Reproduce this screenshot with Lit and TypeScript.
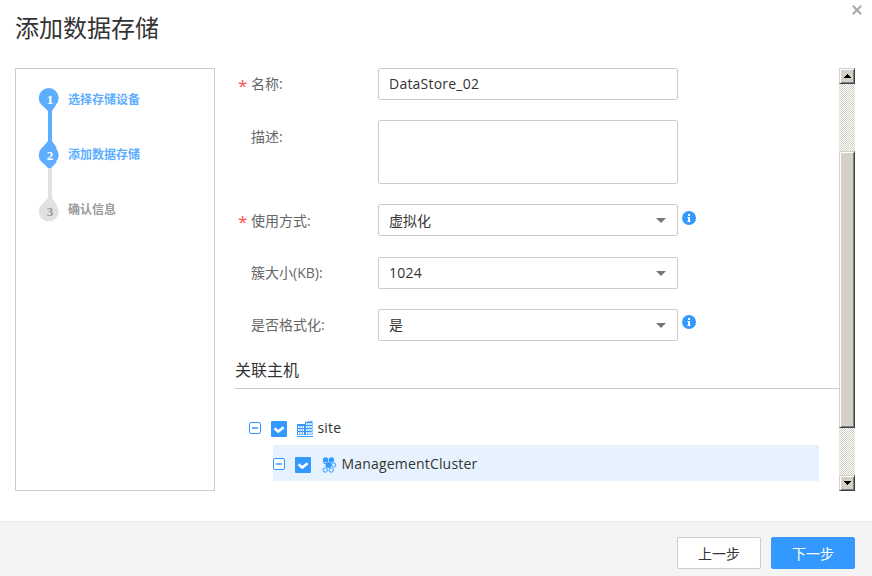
import { LitElement, html, svg, css, nothing } from "lit";
import { customElement } from "lit/decorators.js";

const infoIcon = html`<svg width="14" height="14" viewBox="0 0 14 14">
  <circle cx="7" cy="7" r="7" fill="#3399ff" />
  <path d="M6 3h2v2H6zM5.5 6H8v4h.6v1H5.4v-1H6V7h-.5z" fill="#fff" />
</svg>`;

const minusBox = html`<svg width="12" height="12" viewBox="0 0 12 12">
  <rect x="0.5" y="0.5" width="11" height="11" rx="1.5" fill="#fff" stroke="#3399ff" />
  <path d="M3 5.25h6v1.5H3z" fill="#3399ff" />
</svg>`;

const checkBox = html`<svg width="16" height="16" viewBox="0 0 16 16">
  <rect width="16" height="16" rx="1" fill="#3399ff" />
  <path d="M3.6 7.2l3.6 3.4 5.4-4.4" fill="none" stroke="#fff" stroke-width="2.6" />
</svg>`;

const siteIcon = html`<svg width="16" height="16" viewBox="0 0 16 16">
  <path fill="#3399ff" fill-rule="evenodd" d="M0 3h8v11H0zM1 5v2h1.5V5zM3.3 5v2h1.5V5zM5.6 5v2H7V5zM1 8v2h1.5V8zM3.3 8v2h1.5V8zM5.6 8v2H7V8zM1 11v2.4h1.5V11zM3.3 11v2.4h1.5V11zM5.6 11v2.4H7V11z
    M8 1l7.5-1v14H8zM9 2v2h1.5V2zM11.2 2v2h1.5V2zM13.3 2v2h1.4V2zM9 5v2h1.5V5zM11.2 5v2h1.5V5zM13.3 5v2h1.4V5zM9 8v2h1.5V8zM11.2 8v2h1.5V8zM13.3 8v2h1.4V8zM9 11v2.4h1.5V11zM11.2 11v2.4h1.5V11zM13.3 11v2.4h1.4V11z" />
  <path fill="#3399ff" d="M0 15h16v1H0z" />
</svg>`;

const clusterIcon = html`<svg width="15" height="16" viewBox="0 0 15 16">
  <g fill="#3399ff">
    <circle cx="3.6" cy="2.9" r="2.7" />
    <circle cx="9.4" cy="2.9" r="2.7" />
    <circle cx="6.5" cy="8" r="3" />
  </g>
  <g fill="none" stroke="#3399ff">
    <path d="M1 5.4l1 1.1h1.6" />
    <circle cx="11.7" cy="8" r="2.1" />
    <circle cx="3.2" cy="13" r="2.2" />
    <circle cx="9.2" cy="13" r="2.2" />
  </g>
</svg>`;

@customElement("wizard-steps")
export class WizardSteps extends LitElement {
  static styles = css`
    :host { display: flex; box-sizing: border-box; width: 200px; height: 423px; border: 1px solid #ccc; padding: 19px 0 0 22px; background: #fff; }
    .rail { flex: none; width: 22px; height: 136px; }
    .num { font: bold 13px "Liberation Serif", serif; text-anchor: middle; }
    .labels { display: flex; flex-direction: column; margin-left: 8px; padding-top: 2px; }
    .label { height: 55px; line-height: 20px; font-size: 12px; font-weight: 700; color: #5eaeff; }
    .label.todo { color: #999; }
  `;
  steps = ["选择存储设备", "添加数据存储", "确认信息"];
  render() {
    return html`
      <svg class="rail" viewBox="0 0 22 136">
        <path d="M10 76h4v38h-4z" fill="#e1e1e1" />
        <path d="M4 117l6-7h4l5 7z" fill="#e1e1e1" />
        <circle cx="10.7" cy="123.5" r="10" fill="#e1e1e1" />
        <path d="M10 12h4v48h-4z" fill="#5eaeff" />
        <path d="M4 17l6 6h4l4-6zM4 60l6-7h4l5 7zM4 74l6 6h3l6-6z" fill="#5eaeff" />
        <circle cx="10.7" cy="10" r="10" fill="#5eaeff" />
        <circle cx="10.7" cy="67" r="10" fill="#5eaeff" />
        ${[15.5, 71.5, 128].map((y, i) => svg`<text class="num" x="12" y=${y} fill=${i < 2 ? "#fff" : "#999"}>${i + 1}</text>`)}
      </svg>
      <div class="labels">
        ${this.steps.map((s, i) => html`<span class="label ${i > 1 ? "todo" : ""}">${s}</span>`)}
      </div>`;
  }
}

@customElement("form-row")
export class FormRow extends LitElement {
  static properties = {
    label: {},
    value: {},
    kind: {},
    required: { type: Boolean },
    info: { type: Boolean },
  };
  declare label: string;
  declare value: string;
  declare kind: string;
  declare required: boolean;
  declare info: boolean;
  static styles = css`
    :host { display: flex; align-items: flex-start; height: 32px; font-size: 14px; }
    :host([kind="area"]) { height: 64px; }
    .star { width: 13px; height: 32px; line-height: 35px; color: #ff5050; font-size: 17px; }
    .label { width: 127px; line-height: 32px; color: #666; }
    :host([kind="area"]) .label, :host([kind="select"][required]) .label { line-height: 34px; }
    .field { display: flex; align-items: center; justify-content: space-between; box-sizing: border-box; width: 300px; height: 32px; border: 1px solid #ccc; border-radius: 2px; padding: 0 11px 0 10px; background: #fff; color: #333; }
    .field.area { height: 64px; }
    .value { line-height: 20px; }
    :host([kind="select"][required]) .value { padding-top: 2px; }
    .latin { letter-spacing: 0.22px; }
    .info { display: flex; margin: 7px 0 0 4px; }
    :host([tight]) .info { margin-top: 6px; }
  `;
  render() {
    const latin = /^\w+$/.test(this.value ?? "");
    return html`
      <span class="star">${this.required ? "*" : nothing}</span>
      <span class="label">${this.label}:</span>
      <div class="field ${this.kind ?? ""}">
        <span class="value ${latin ? "latin" : ""}">${this.value}</span>
        ${this.kind === "select"
          ? html`<svg width="10" height="5" viewBox="0 0 10 5"><path d="M0 0h10L5 5z" fill="#777" /></svg>`
          : nothing}
      </div>
      ${this.info ? html`<span class="info">${infoIcon}</span>` : nothing}`;
  }
}

@customElement("classic-scrollbar")
export class ClassicScrollbar extends LitElement {
  static styles = css`
    :host { display: flex; flex-direction: column; width: 16px; height: 423px; background: repeating-conic-gradient(#d4d0c8 0 25%, #fff 0 50%) 0 0 / 2px 2px; }
    .part { flex: none; box-sizing: border-box; height: 16px; display: flex; align-items: center; justify-content: center; background: #d4d0c8; border: 1px solid; border-color: #d4d0c8 #404040 #404040 #d4d0c8; box-shadow: inset 1px 1px #fff, inset -1px -1px #808080; }
    .thumb { height: 277px; margin: 67px 0 auto; }
  `;
  render() {
    return html`
      <div class="part"><svg width="7" height="4" shape-rendering="crispEdges"><path d="M3 0h1v1h1v1h1v1h1v1H0V3h1V2h1V1h1z" /></svg></div>
      <div class="part thumb"></div>
      <div class="part"><svg width="7" height="4" shape-rendering="crispEdges"><path d="M0 0h7v1H6v1H5v1H4v1H3V3H2V2H1V1H0z" /></svg></div>`;
  }
}

@customElement("app-root")
export class AppRoot extends LitElement {
  static styles = css`
    :host { display: flex; flex-direction: column; width: 872px; height: 576px; overflow: hidden; background: #fff; color: #333; font-family: "Open Sans", "Noto Sans CJK SC", sans-serif; font-size: 14px; }
    .head { display: flex; justify-content: space-between; height: 68px; box-sizing: border-box; padding: 5px 10px 0 15px; flex: none; }
    .title { margin: 0; font-size: 24px; font-weight: 400; line-height: 46px; }
    .body { display: flex; height: 453px; flex: none; padding: 0 17px 0 15px; box-sizing: border-box; }
    .form { display: flex; flex-direction: column; width: 604px; margin-left: 20px; height: 423px; }
    .rows { display: flex; flex-direction: column; gap: 20px; padding-left: 3px; }
    .rows .late { margin-top: 1px; }
    .section { margin: 13px 0 0; height: 34px; line-height: 33px; border-bottom: 1px solid #ccc; font-size: 16px; font-weight: 400; flex: none; box-sizing: content-box; }
    .tree { display: flex; flex-direction: column; padding: 20px 20px 0 14px; }
    .node { display: flex; align-items: center; height: 36px; box-sizing: border-box; padding-top: 2px; }
    .node.child { margin-left: 24px; background: #e6f3ff; }
    .check { display: flex; margin: 2px 10px 0 10px; }
    .icon { display: flex; margin-top: 2px; width: 16px; }
    .child .icon { margin-left: 1px; width: 15px; }
    .name { margin-left: 4.5px; line-height: 20px; letter-spacing: 0.18px; }
    .foot { flex: 1; display: flex; justify-content: flex-end; gap: 10px; padding: 15px 17px 0 0; background: #f4f4f4; border-top: 1px solid #e8e8e8; }
    .btn { box-sizing: border-box; width: 84px; height: 32px; padding: 2px 0 0; border: 1px solid #ccc; border-radius: 2px; background: #fff; color: #333; font: inherit; line-height: 28px; }
    .btn.primary { background: #3399ff; border-color: #3399ff; color: #fff; }
  `;
  render() {
    return html`
      <div class="head">
        <h1 class="title">添加数据存储</h1>
        <svg width="10" height="10" viewBox="0 0 10 10"><path d="M0.8 0.8l8.4 8.4M9.2 0.8L0.8 9.2" stroke="#aaa" stroke-width="2" /></svg>
      </div>
      <div class="body">
        <wizard-steps></wizard-steps>
        <div class="form">
          <div class="rows">
            <form-row label="名称" value="DataStore_02" required></form-row>
            <form-row label="描述" kind="area"></form-row>
            <form-row label="使用方式" value="虚拟化" kind="select" required info></form-row>
            <form-row class="late" label="簇大小(KB)" value="1024" kind="select"></form-row>
            <form-row label="是否格式化" value="是" kind="select" info tight></form-row>
          </div>
          <h2 class="section">关联主机</h2>
          <div class="tree">
            <div class="node">${minusBox}<span class="check">${checkBox}</span><span class="icon">${siteIcon}</span><span class="name">site</span></div>
            <div class="node child">${minusBox}<span class="check">${checkBox}</span><span class="icon">${clusterIcon}</span><span class="name">ManagementCluster</span></div>
          </div>
        </div>
        <classic-scrollbar></classic-scrollbar>
      </div>
      <div class="foot">
        <button class="btn">上一步</button>
        <button class="btn primary">下一步</button>
      </div>`;
  }
}
